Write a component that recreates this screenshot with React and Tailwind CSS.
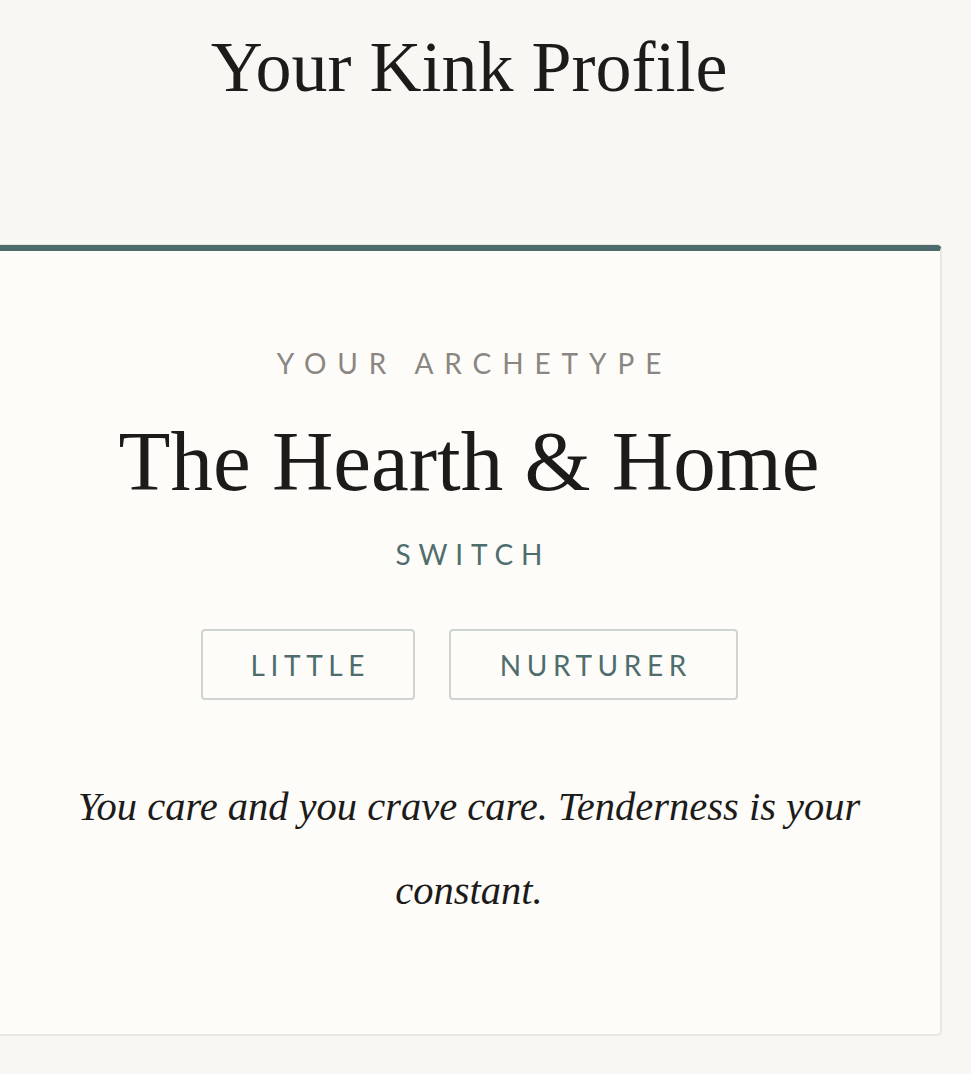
import React from "react";

export default function App() {
  return (
    <div className="min-h-[1074px] w-full overflow-hidden bg-[#f9f7f4]">
      <div className="flex w-[938px] flex-col items-center">
        <h1 className="pt-[27px] font-['Liberation_Serif','Times_New_Roman',serif] text-[72px] leading-[80px] font-normal text-[#1c1b19]">
          Your Kink Profile
        </h1>
        <div className="mt-[138px] w-[946px] shrink-0 -mx-1 rounded-[5px] border-2 border-[#ebe7e2] border-t-[6px] border-t-[#4d6b6b] bg-[#fdfcf9] shadow-[0_-1px_0_#e6e2dc]">
          <div className="flex flex-col items-center px-16 pt-[92px] pb-[101px] text-center">
            <div className="pl-[0.39em] font-['Lato','Open_Sans',sans-serif] text-[28px] leading-[40px] tracking-[0.39em] text-[#8a8681]">
              YOUR ARCHETYPE
            </div>
            <h2 className="mt-[30px] font-['Liberation_Serif','Times_New_Roman',serif] text-[85px] leading-[96px] font-normal text-[#1c1b19]">
              The Hearth &amp; Home
            </h2>
            <div className="mt-[25px] pl-[0.28em] font-['Lato','Open_Sans',sans-serif] text-[28px] leading-[40px] tracking-[0.28em] text-[#4f6d6d]">
              SWITCH
            </div>
            <div className="mt-[55px] flex gap-[34px]">
              <span className="flex h-[71px] w-[214px] items-center justify-center rounded-[4px] border-2 border-[#cfd4d0] pl-[0.2em] font-['Lato','Open_Sans',sans-serif] text-[28px] tracking-[0.2em] text-[#4f6d6d]">
                LITTLE
              </span>
              <span className="flex h-[71px] w-[289px] items-center justify-center rounded-[4px] border-2 border-[#cfd4d0] pl-[0.2em] font-['Lato','Open_Sans',sans-serif] text-[28px] tracking-[0.2em] text-[#4f6d6d]">
                NURTURER
              </span>
            </div>
            <p className="mt-[65px] font-['Liberation_Serif','Times_New_Roman',serif] text-[40.5px] leading-[84px] italic text-[#1c1b19]">
              You care and you crave care. Tenderness is your
              <br />
              constant.
            </p>
          </div>
        </div>
      </div>
    </div>
  );
}
